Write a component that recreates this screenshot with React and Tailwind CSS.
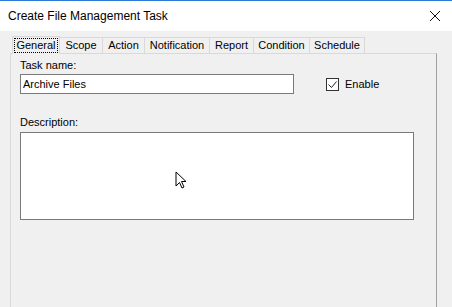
const tabs = [
  { name: "General", w: "w-[48px]" },
  { name: "Scope", w: "w-[43px]" },
  { name: "Action", w: "w-[42px]" },
  { name: "Notification", w: "w-[65px]" },
  { name: "Report", w: "w-[44px]" },
  { name: "Condition", w: "w-[56px]" },
  { name: "Schedule", w: "w-[55px]" },
];

const App = () => {
  return (
    <div className="w-[452px] h-[307px] overflow-hidden bg-[#f0f0f0] border-t border-[#2b79d8] font-['Liberation_Sans',sans-serif] text-[11px] text-black">
      {/* title bar */}
      <div className="h-[30px] bg-white flex items-center justify-between pl-[8px] pr-[10px]">
        <span className="text-[12px] text-[#000]">Create File Management Task</span>
        <svg width="12" height="12" viewBox="0 0 12 12" className="mr-[1px]">
          <path d="M1 1 L11 11 M11 1 L1 11" stroke="#111" strokeWidth="1" />
        </svg>
      </div>

      <div className="pl-[10px] pt-[4px]">
        {/* tabs */}
        <div className="flex items-end h-[18px] pl-[2px]">
          {tabs.map((t, i) =>
            i === 0 ? (
              <div
                key={t.name}
                className={`${t.w} h-[18px] bg-[#f0f0f0] border border-b-0 border-[#d9d9d9] flex items-center justify-center relative -mb-px z-10`}
              >
                <span className="border border-dotted border-black px-[1px] leading-[13px]">
                  {t.name}
                </span>
              </div>
            ) : (
              <div
                key={t.name}
                className={`${t.w} h-[16px] bg-[#f0f0f0] border border-b-0 border-l-0 border-[#d9d9d9] flex items-center justify-center`}
              >
                {t.name}
              </div>
            )
          )}
        </div>

        {/* panel */}
        <div className="w-[427px] h-[260px] border border-[#d9d9d9] border-r-[#a0a0a0] bg-[#f0f0f0] pl-[9px] pt-[5px]">
          <div className="leading-[13px]">Task name:</div>
          <div className="flex items-center mt-[2px]">
            <div className="w-[274px] h-[20px] bg-white border border-[#7a7a7a] flex items-center pl-[2px]">
              Archive Files
            </div>
            <div className="flex items-center ml-[32px]">
              <div className="w-[13px] h-[13px] bg-white border border-[#333] flex items-center justify-center">
                <svg width="11" height="11" viewBox="0 0 11 11">
                  <path d="M1.5 5.5 L4.5 8.5 L9.5 2.5" stroke="#222" strokeWidth="1" fill="none" />
                </svg>
              </div>
              <span className="ml-[6px]">Enable</span>
            </div>
          </div>

          <div className="leading-[13px] mt-[22px]">Description:</div>
          <div className="w-[394px] h-[88px] bg-white border border-[#7a7a7a] mt-[3px] relative">
            <svg
              width="14"
              height="20"
              viewBox="0 0 14 20"
              className="absolute left-[154px] top-[38px]"
            >
              <path
                d="M1 1 L1 15 L4.5 11.5 L7 17 L9 16 L6.5 10.5 L11 10.5 Z"
                fill="white"
                stroke="black"
                strokeWidth="1"
                strokeLinejoin="miter"
              />
            </svg>
          </div>
        </div>
      </div>
    </div>
  );
};

export default App;
